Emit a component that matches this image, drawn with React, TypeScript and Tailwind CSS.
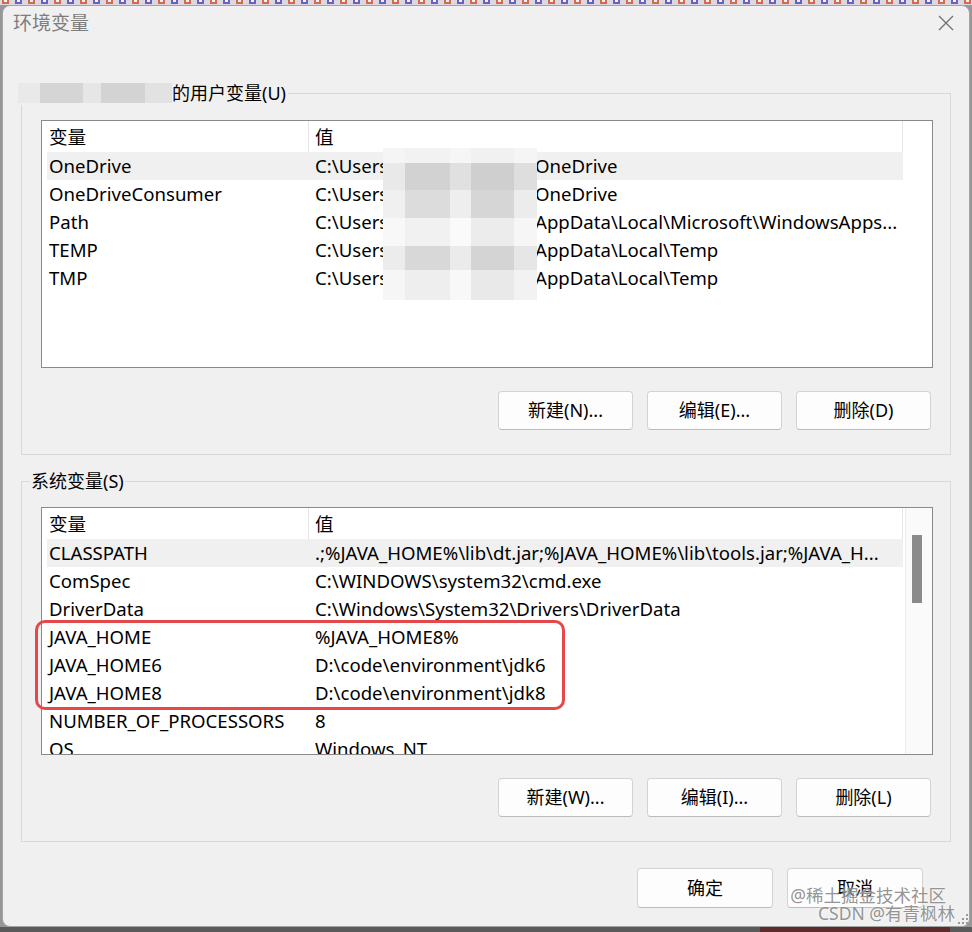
import React from "react";

type Row = { name: string; value: React.ReactNode };

const userRows: Row[] = [
  { name: "OneDrive", value: <UserPath rest="OneDrive" /> },
  { name: "OneDriveConsumer", value: <UserPath rest="OneDrive" /> },
  { name: "Path", value: <UserPath rest={"AppData\\Local\\Microsoft\\WindowsApps..."} /> },
  { name: "TEMP", value: <UserPath rest={"AppData\\Local\\Temp"} /> },
  { name: "TMP", value: <UserPath rest={"AppData\\Local\\Temp"} /> },
];

const systemRows: Row[] = [
  { name: "CLASSPATH", value: ".;%JAVA_HOME%\\lib\\dt.jar;%JAVA_HOME%\\lib\\tools.jar;%JAVA_H..." },
  { name: "ComSpec", value: "C:\\WINDOWS\\system32\\cmd.exe" },
  { name: "DriverData", value: "C:\\Windows\\System32\\Drivers\\DriverData" },
  { name: "JAVA_HOME", value: "%JAVA_HOME8%" },
  { name: "JAVA_HOME6", value: "D:\\code\\environment\\jdk6" },
  { name: "JAVA_HOME8", value: "D:\\code\\environment\\jdk8" },
  { name: "NUMBER_OF_PROCESSORS", value: "8" },
  { name: "OS", value: "Windows_NT" },
  { name: "Path", value: "C:\\WINDOWS\\system32" },
];

// pixelated username blur over the value column
const mosaicCols = [22, 45, 21, 43, 23];
const mosaicRows = [15, 27, 28, 28, 24, 30];
const mosaic = [
  ["#f5f5f5", "#f2f2f2", "#f6f6f6", "#f1f1f1", "#f5f5f5"],
  ["#e9e9e9", "#d2d2d2", "#e0e0e0", "#cfcfcf", "#dedede"],
  ["#f0f0f0", "#dcdcdc", "#eeeeee", "#d6d6d6", "#ececec"],
  ["#f8f8f8", "#f1f1f1", "#fafafa", "#ececec", "#f6f6f6"],
  ["#ececec", "#d8d8d8", "#ebebeb", "#d4d4d4", "#e6e6e6"],
  ["#f6f6f6", "#eeeeee", "#f8f8f8", "#e9e9e9", "#f2f2f2"],
];

function UserPath({ rest }: { rest: string }) {
  return (
    <>
      <span className="inline-block w-[220px] shrink-0">{"C:\\Users"}</span>
      <span>{rest}</span>
    </>
  );
}

function Mosaic() {
  return (
    <div className="pointer-events-none absolute left-[342px] top-[28px] flex flex-col">
      {mosaic.map((line, r) => (
        <div key={r} className="flex" style={{ height: mosaicRows[r] }}>
          {line.map((c, i) => (
            <div key={i} style={{ width: mosaicCols[i], backgroundColor: c }} />
          ))}
        </div>
      ))}
    </div>
  );
}

function ListBox({ rows, scrollbar, children }: { rows: Row[]; scrollbar?: boolean; children?: React.ReactNode }) {
  return (
    <div className="relative ml-[19px] h-[248px] w-[892px]">
      <div className="flex h-full overflow-hidden border border-[#8a8a8a] bg-white text-[18.6px] text-black">
        <div className="ml-[5px] flex w-[856px] shrink-0 flex-col">
          <div className="flex h-[31px] shrink-0 items-center">
            <div className="w-[261px] shrink-0 pl-[2px]">变量</div>
            <div className="flex h-full flex-1 items-center border-l border-r border-[#e5e5e5] pl-[6px]">值</div>
          </div>
          {rows.map((r, i) => (
            <div
              key={r.name + i}
              className={`flex h-[28px] shrink-0 items-center leading-[28px] ${i === 0 ? "bg-[#f0f0f0]" : ""}`}
            >
              <div className="w-[261px] shrink-0 whitespace-nowrap pl-[2px]">{r.name}</div>
              <div className="min-w-0 flex-1 overflow-hidden whitespace-nowrap pl-[7px]">{r.value}</div>
            </div>
          ))}
        </div>
        {scrollbar && (
          <div className="ml-[2px] w-[27px] shrink-0 border-l border-[#ececec] bg-[#fafafa]">
            <div className="ml-[6px] mt-[27px] h-[68px] w-[10px] bg-[#8a8a8a]" />
          </div>
        )}
      </div>
      {children}
    </div>
  );
}

function Btn({ label }: { label: string }) {
  return (
    <button className="flex h-[39px] w-[135px] items-center justify-center rounded-[4px] border border-[#d3d3d3] border-b-[#bcbcbc] bg-[#fdfdfd] text-[18px] text-black">
      {label}
    </button>
  );
}

function Group({ legend, children, className }: { legend: React.ReactNode; children: React.ReactNode; className?: string }) {
  return (
    <fieldset className={`ml-[18px] w-[930px] border border-[#d9d9d9] pb-[24px] ${className ?? ""}`}>
      {legend}
      {children}
    </fieldset>
  );
}

export default function App() {
  return (
    <div className="relative flex h-[932px] w-[972px] flex-col overflow-hidden bg-[#979797] font-['Noto_Sans','Noto_Sans_CJK_SC',sans-serif]">
      <svg width="972" height="5" className="shrink-0">
        <defs>
          <pattern id="taskbar" width="26" height="5" patternUnits="userSpaceOnUse">
            <rect width="26" height="5" fill="#dcd8e0" />
            <rect x="2" width="7" height="4" fill="#d9694c" />
            <rect x="4" width="3" height="2" fill="#f3f3f3" />
            <rect x="15" width="7" height="4" fill="#6a5fc2" />
            <rect x="17" width="3" height="2" fill="#f3f3f3" />
          </pattern>
        </defs>
        <rect width="972" height="5" fill="url(#taskbar)" />
      </svg>

      <div className="ml-[2px] flex h-[922px] w-[968px] shrink-0 flex-col rounded-[8px] border border-[#a3a3a3] bg-[#f0f0f0]">
        <div className="flex h-[34px] shrink-0 items-center justify-between pl-[10px] pr-[15px]">
          <span className="text-[19px] text-[#7d7d7d]">环境变量</span>
          <svg width="16" height="16" viewBox="0 0 16 16">
            <path d="M1 1 L15 15 M15 1 L1 15" stroke="#6f6f6f" strokeWidth="1.3" fill="none" />
          </svg>
        </div>

        <Group
          className="mt-[41px]"
          legend={
            <legend className="ml-[-4px] flex h-[24px] items-center pr-[2px] text-[18px] text-black">
              <span className="flex h-[20px]">
                <span className="w-[22px] bg-[#e9e9e9]" />
                <span className="w-[43px] bg-[#d5d5d5]" />
                <span className="w-[18px] bg-[#e6e6e6]" />
                <span className="w-[44px] bg-[#d3d3d3]" />
                <span className="w-[27px] bg-[#e2e2e2]" />
              </span>
              <span>的用户变量(U)</span>
            </legend>
          }
        >
          <div className="pt-[15px]">
            <ListBox rows={userRows}>
              <Mosaic />
            </ListBox>
          </div>
          <div className="mt-[23px] flex justify-end gap-[14px] pr-[19px]">
            <Btn label="新建(N)..." />
            <Btn label="编辑(E)..." />
            <Btn label="删除(D)" />
          </div>
        </Group>

        <Group
          className="mt-[14px]"
          legend={
            <legend className="ml-[8px] flex h-[24px] items-center px-[1px] text-[18px] text-black">系统变量(S)</legend>
          }
        >
          <div className="pt-[14px]">
            <ListBox rows={systemRows} scrollbar>
              <div className="pointer-events-none absolute left-[-6px] top-[113px] h-[90px] w-[530px] rounded-[10px] border-[3px] border-[#e5484a]" />
            </ListBox>
          </div>
          <div className="mt-[23px] flex justify-end gap-[14px] pr-[19px]">
            <Btn label="新建(W)..." />
            <Btn label="编辑(I)..." />
            <Btn label="删除(L)" />
          </div>
        </Group>

        <div className="mt-[26px] flex justify-end gap-[14px] pr-[46px]">
          <button className="flex h-[40px] w-[136px] items-center justify-center rounded-[4px] border border-[#d3d3d3] border-b-[#bcbcbc] bg-[#fdfdfd] text-[18px] text-black">
            确定
          </button>
          <button className="flex h-[40px] w-[136px] items-center justify-center rounded-[4px] border border-[#d3d3d3] border-b-[#bcbcbc] bg-[#fdfdfd] text-[18px] text-black">
            取消
          </button>
        </div>
      </div>

      <div className="flex h-[5px] shrink-0">
        <div className="w-[760px] bg-[#5a5a5a]" />
        <div className="w-[190px] bg-[#5c2b2b]" />
        <div className="flex-1 bg-[#5a5a5a]" />
      </div>

      <div className="pointer-events-none absolute right-[17px] top-[886px] flex flex-col items-end text-[17.5px] leading-[18px] text-[rgba(120,120,120,0.8)] [text-shadow:0_0_2px_#ffffff]">
        <span className="mr-[9px]">@稀土掘金技术社区</span>
        <span>CSDN @有青枫林</span>
      </div>

      <svg width="11" height="11" viewBox="0 0 11 11" className="pointer-events-none absolute left-[958px] top-[914px]">
        <g fill="#9a9a9a">
          <rect x="8" y="0" width="2" height="2" />
          <rect x="4" y="4" width="2" height="2" />
          <rect x="8" y="4" width="2" height="2" />
          <rect x="0" y="8" width="2" height="2" />
          <rect x="4" y="8" width="2" height="2" />
          <rect x="8" y="8" width="2" height="2" />
        </g>
      </svg>
    </div>
  );
}
